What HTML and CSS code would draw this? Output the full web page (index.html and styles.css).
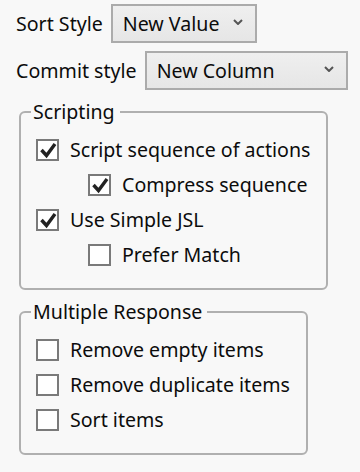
FILE: index.html
```html
<!DOCTYPE html>
<html>
<head>
  <title>Preferences</title>
  <link rel="stylesheet" href="styles.css">
</head>
<body>
  <div class="form">
    <div class="field-row">
      <span class="field-label">Sort Style</span>
      <div class="combo combo-sort">
        <span>New Value</span>
        <svg class="chevron" width="10" height="6" viewBox="0 0 10 6"><path d="M1 1 L5 5 L9 1" fill="none" stroke="#555" stroke-width="2"/></svg>
      </div>
    </div>
    <div class="field-row">
      <span class="field-label">Commit style</span>
      <div class="combo combo-commit">
        <span>New Column</span>
        <svg class="chevron" width="10" height="6" viewBox="0 0 10 6"><path d="M1 1 L5 5 L9 1" fill="none" stroke="#555" stroke-width="2"/></svg>
      </div>
    </div>

    <fieldset class="group">
      <legend>Scripting</legend>
      <label class="check">
        <span class="box"><svg width="22" height="22" viewBox="0 0 22 22"><path d="M4.5 11 L9.5 16.5 L18 5" fill="none" stroke="#222" stroke-width="3.4"/></svg></span>
        Script sequence of actions
      </label>
      <label class="check sub">
        <span class="box"><svg width="22" height="22" viewBox="0 0 22 22"><path d="M4.5 11 L9.5 16.5 L18 5" fill="none" stroke="#222" stroke-width="3.4"/></svg></span>
        Compress sequence
      </label>
      <label class="check">
        <span class="box"><svg width="22" height="22" viewBox="0 0 22 22"><path d="M4.5 11 L9.5 16.5 L18 5" fill="none" stroke="#222" stroke-width="3.4"/></svg></span>
        Use Simple JSL
      </label>
      <label class="check sub">
        <span class="box"></span>
        Prefer Match
      </label>
    </fieldset>

    <fieldset class="group">
      <legend>Multiple Response</legend>
      <label class="check"><span class="box"></span>Remove empty items</label>
      <label class="check"><span class="box"></span>Remove duplicate items</label>
      <label class="check"><span class="box"></span>Sort items</label>
    </fieldset>
  </div>
</body>
</html>
```

FILE: styles.css
```css
body {
  margin: 0;
  background-color: #f8f8f8;
  font-family: "Noto Sans", "Open Sans", sans-serif;
  font-size: 19.6px;
  color: #0c0c0c;
}
.form {
  padding: 4px 0 0 16px;
}
.field-row {
  display: flex;
  align-items: center;
  gap: 8px;
  margin-bottom: 8px;
}
.combo {
  display: flex;
  align-items: center;
  justify-content: space-between;
  box-sizing: border-box;
  height: 39px;
  padding: 0 12px 3px 10px;
  border: 2px solid #ababab;
  background: linear-gradient(#efefef, #e6e6e6);
}
.combo span {
  padding-top: 3px;
}
.combo-sort {
  width: 146px;
}
.combo-commit {
  width: 203px;
}
.group {
  width: fit-content;
  margin: 10px 0 0 3px;
  padding: 8px 16px 16px 15px;
  border: 2px solid #b0b0b0;
  border-radius: 6px;
}
.group legend {
  margin-left: -5px;
  padding: 0 5px 0 2px;
  line-height: 24px;
}
.check {
  display: flex;
  align-items: center;
  gap: 11px;
  height: 35px;
  white-space: nowrap;
}
.check.sub {
  padding-left: 52px;
}
.box {
  box-sizing: border-box;
  width: 23px;
  height: 22px;
  border: 2px solid #7a7a7a;
  background-color: #fff;
  flex-shrink: 0;
}
.box svg {
  display: block;
  margin: -2px 0 0 -1px;
}
```
